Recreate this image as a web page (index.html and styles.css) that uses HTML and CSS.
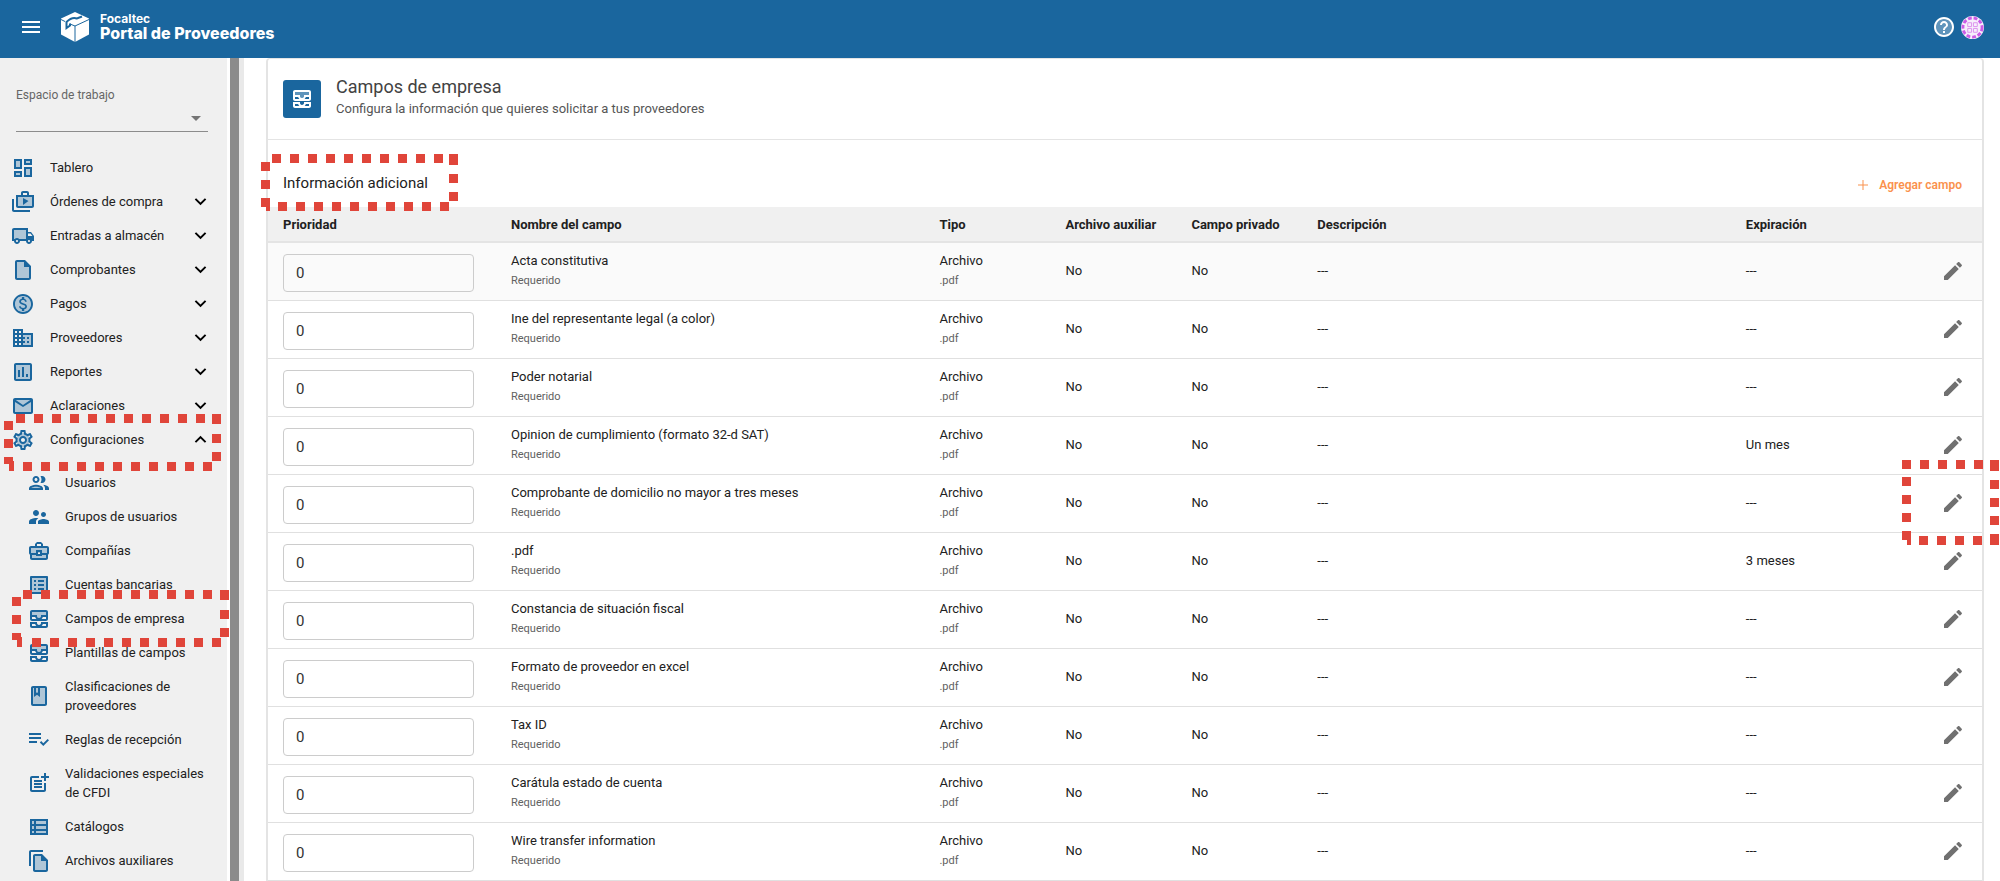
FILE: index.html
```html
<!DOCTYPE html>
<html lang="es">
<head>
    <meta charset="UTF-8">
    <meta name="viewport" content="width=device-width, initial-scale=1.0">
    <title>Portal de Proveedores</title>
    <link rel="stylesheet" href="styles.css">
</head>
<body>
    <svg class="sprite" aria-hidden="true">
        <symbol id="i-inbox" viewBox="0 0 24 24">
            <path class="tone" d="M5 5h14v3h-5v1c0 1.07-.93 2-2 2s-2-.93-2-2V8H5z"/>
            <path d="M19 3H5c-1.1 0-2 .9-2 2v7c0 1.1.9 2 2 2h14c1.1 0 2-.9 2-2V5c0-1.1-.9-2-2-2zM5 10h3.13c.21.78.67 1.47 1.27 2H5v-2zm14 2h-4.4c.6-.53 1.06-1.22 1.27-2H19v2zm0-4h-5v1c0 1.07-.93 2-2 2s-2-.93-2-2V8H5V5h14v3zm-5 7v1c0 .47-.19.9-.48 1.25-.37.45-.92.75-1.52.75s-1.15-.3-1.52-.75c-.29-.35-.48-.78-.48-1.25v-1H3v4c0 1.1.9 2 2 2h14c1.1 0 2-.9 2-2v-4h-7zm-9 2h3.13c.02.09.06.17.09.25.24.68.65 1.28 1.18 1.75H5v-2zm14 2h-4.4c.54-.47.95-1.07 1.18-1.75.03-.08.07-.17.09-.25H19v2z"/>
        </symbol>
        <symbol id="i-edit" viewBox="0 0 24 24">
            <path d="M3 17.25V21h3.75L17.81 9.94l-3.75-3.75L3 17.25zM20.71 7.04c.39-.39.39-1.02 0-1.41l-2.34-2.34c-.39-.39-1.02-.39-1.41 0l-1.83 1.83 3.75 3.75 1.83-1.83z"/>
        </symbol>
        <symbol id="i-down" viewBox="0 0 24 24">
            <path d="M7.41 8.59L12 13.17l4.59-4.58L18 10l-6 6-6-6z"/>
        </symbol>
    </svg>

    <header class="topbar">
        <button class="menu-btn" aria-label="Menú">
            <svg class="menu-icon" viewBox="0 0 18 12"><path d="M0 0h18v2H0zM0 5h18v2H0zM0 10h18v2H0z"/></svg>
        </button>
        <a class="brand" href="#">
            <svg class="brand-logo" viewBox="0 0 30 30">
                <path d="M15 0L29 6.5V22.5L15 30 1 22.5V6.5z"/>
                <path class="brand-seam" d="M29 7.5L15 14V30M1 7.5L5 9.5M10 12L15 14"/>
                <path class="brand-cut" d="M22 4.5L17 6.5Q12 4.5 6.500 10V16L10 13.5V11.5"/>
            </svg>
            <span class="brand-text">
                <span class="brand-small">Focaltec</span>
                <span class="brand-name">Portal de Proveedores</span>
            </span>
        </a>
        <div class="topbar-right">
            <button class="round-btn" aria-label="Ayuda">
                <svg class="icon" viewBox="0 0 24 24"><circle class="tone" cx="12" cy="12" r="9"/><path d="M11 18h2v-2h-2v2zm1-16C6.480 2 2 6.480 2 12s4.480 10 10 10 10-4.480 10-10S17.520 2 12 2zm0 18c-4.410 0-8-3.590-8-8s3.590-8 8-8 8 3.590 8 8-3.590 8-8 8zm0-14c-2.210 0-4 1.790-4 4h2c0-1.100.9-2 2-2s2 .9 2 2c0 2-3 1.750-3 5h2c0-2.250 3-2.500 3-5 0-2.210-1.790-4-4-4z"/></svg>
            </button>
            <button class="round-btn" aria-label="Cuenta">
                <svg class="avatar" viewBox="0 0 24 24">
                    <circle class="avatar-bg" cx="12" cy="12" r="12"/>
                    <circle class="avatar-ring" cx="12" cy="12" r="10"/>
                    <path class="avatar-grid" d="M7 7h4v4H7zM13 7h4v4h-4zM7 13h4v4H7zM13 13h4v4h-4z"/>
                </svg>
            </button>
        </div>
    </header>

    <div class="layout">
        <nav class="sidebar">
            <div class="workspace">
                <label for="workspace">Espacio de trabajo</label>
                <div class="select-wrap">
                    <select id="workspace"><option></option></select>
                    <span class="caret"></span>
                </div>
            </div>

            <ul class="menu">
                <li><a href="#">
                    <svg class="icon" viewBox="0 0 24 24"><path class="tone" d="M5 5h4v6H5zm10 8h4v6h-4zM5 17h4v2H5zM15 5h4v2h-4z"/><path d="M3 13h8V3H3v10zm2-8h4v6H5V5zm8 16h8V11h-8v10zm2-8h4v6h-4v-6zM13 3v6h8V3h-8zm6 4h-4V5h4v2zM3 21h8v-6H3v6zm2-4h4v2H5v-2z"/></svg>
                    <span>Tablero</span>
                </a></li>
                <li><a href="#">
                    <svg class="icon" viewBox="0 0 24 24"><path class="tone" d="M7 7h14v9H7z"/><path d="M3 9H1v11c0 1.110.89 2 2 2h16v-2H3V9z"/><path d="M18 5V3c0-1.110-.89-2-2-2h-4c-1.110 0-2 .89-2 2v2H5v11c0 1.110.89 2 2 2h14c1.110 0 2-.89 2-2V5h-5zm-6-2h4v2h-4V3zm9 13H7V7h14v9zM12 8v7l5.500-4z"/></svg>
                    <span>Órdenes de compra</span>
                    <svg class="chevron"><use href="#i-down"/></svg>
                </a></li>
                <li><a href="#">
                    <svg class="icon" viewBox="0 0 24 24"><path class="tone" d="M3 6h12v9H3z"/><path d="M20 8h-3V4H3c-1.100 0-2 .9-2 2v11h2c0 1.660 1.340 3 3 3s3-1.340 3-3h6c0 1.660 1.340 3 3 3s3-1.340 3-3h2v-5l-3-4zm-.5 1.500l1.960 2.500H17V9.500h2.500zM6 18c-.55 0-1-.45-1-1s.45-1 1-1 1 .45 1 1-.45 1-1 1zm2.220-3c-.55-.61-1.330-1-2.220-1s-1.670.39-2.220 1H3V6h12v9H8.220zM18 18c-.55 0-1-.45-1-1s.45-1 1-1 1 .45 1 1-.45 1-1 1z"/></svg>
                    <span>Entradas a almacén</span>
                    <svg class="chevron"><use href="#i-down"/></svg>
                </a></li>
                <li><a href="#">
                    <svg class="icon" viewBox="0 0 24 24"><path class="tone" d="M13 4H6v16h12V9h-5z"/><path d="M14 2H6c-1.100 0-2 .9-2 2v16c0 1.100.9 2 2 2h12c1.100 0 2-.9 2-2V8l-6-6zM6 20V4h7v5h5v11H6z"/></svg>
                    <span>Comprobantes</span>
                    <svg class="chevron"><use href="#i-down"/></svg>
                </a></li>
                <li><a href="#">
                    <svg class="icon" viewBox="0 0 24 24"><circle class="tone" cx="12" cy="12" r="8"/><path d="M12 2C6.480 2 2 6.480 2 12s4.480 10 10 10 10-4.480 10-10S17.520 2 12 2zm0 18c-4.410 0-8-3.590-8-8s3.590-8 8-8 8 3.590 8 8-3.590 8-8 8zm.31-8.860c-1.770-.45-2.340-.94-2.340-1.670 0-.84.79-1.430 2.100-1.430 1.380 0 1.900.66 1.940 1.640h1.710c-.05-1.340-.87-2.570-2.490-2.970V5H10.900v1.690c-1.510.32-2.720 1.300-2.720 2.810 0 1.790 1.490 2.690 3.660 3.210 1.950.46 2.340 1.150 2.340 1.870 0 .53-.39 1.390-2.100 1.390-1.600 0-2.230-.72-2.320-1.640H8.040c.1 1.700 1.360 2.660 2.860 2.970V19h2.340v-1.670c1.520-.29 2.720-1.160 2.730-2.770-.01-2.200-1.900-2.960-3.660-3.420z"/></svg>
                    <span>Pagos</span>
                    <svg class="chevron"><use href="#i-down"/></svg>
                </a></li>
                <li><a href="#">
                    <svg class="icon" viewBox="0 0 24 24"><path class="tone" d="M12 9h8v10h-8z"/><path d="M12 7V3H2v18h20V7H12zM6 19H4v-2h2v2zm0-4H4v-2h2v2zm0-4H4V9h2v2zm0-4H4V5h2v2zm4 12H8v-2h2v2zm0-4H8v-2h2v2zm0-4H8V9h2v2zm0-4H8V5h2v2zm10 12h-8v-2h2v-2h-2v-2h2v-2h-2V9h8v10zm-2-8h-2v2h2v-2zm0 4h-2v2h2v-2z"/></svg>
                    <span>Proveedores</span>
                    <svg class="chevron"><use href="#i-down"/></svg>
                </a></li>
                <li><a href="#">
                    <svg class="icon" viewBox="0 0 24 24"><path class="tone" d="M5 5h14v14H5z"/><path d="M19 3H5c-1.100 0-2 .9-2 2v14c0 1.100.9 2 2 2h14c1.100 0 2-.9 2-2V5c0-1.100-.9-2-2-2zm0 16H5V5h14v14zM7 10h2v7H7zm4-3h2v10h-2zm4 7h2v3h-2z"/></svg>
                    <span>Reportes</span>
                    <svg class="chevron"><use href="#i-down"/></svg>
                </a></li>
                <li><a href="#">
                    <svg class="icon" viewBox="0 0 24 24"><path class="tone" d="M4 6h16v12H4z"/><path d="M20 4H4c-1.100 0-2 .9-2 2v12c0 1.100.9 2 2 2h16c1.100 0 2-.9 2-2V6c0-1.100-.9-2-2-2zm-.8 2L12 11 4.800 6h14.400zM4 18V8l8 5 8-5v10H4z"/></svg>
                    <span>Aclaraciones</span>
                    <svg class="chevron"><use href="#i-down"/></svg>
                </a></li>
                <li class="marked"><a href="#">
                    <svg class="icon" viewBox="0 0 24 24"><path class="tone" d="M12 5a7 7 0 1 0 .01 0zM12 9a3 3 0 1 1-.01 0z"/><path d="M19.430 12.980c.04-.32.07-.64.07-.98 0-.34-.03-.66-.07-.98l2.110-1.650c.19-.15.24-.42.12-.64l-2-3.460c-.09-.16-.26-.25-.44-.25-.06 0-.12.01-.17.03l-2.490 1c-.52-.4-1.080-.73-1.690-.98l-.38-2.650C14.460 2.180 14.250 2 14 2h-4c-.25 0-.46.18-.49.42l-.38 2.650c-.61.25-1.170.59-1.690.98l-2.490-1c-.06-.02-.12-.03-.18-.03-.17 0-.34.09-.43.25l-2 3.460c-.13.22-.07.49.12.64l2.110 1.650c-.04.32-.07.65-.07.98 0 .33.03.66.07.98l-2.110 1.650c-.19.15-.24.42-.12.64l2 3.460c.09.16.26.25.44.25.06 0 .12-.01.17-.03l2.490-1c.52.4 1.080.73 1.690.98l.38 2.650c.03.24.24.42.49.42h4c.25 0 .46-.18.49-.42l.38-2.650c.61-.25 1.170-.59 1.690-.98l2.490 1c.06.02.12.03.18.03.17 0 .34-.09.43-.25l2-3.460c.12-.22.07-.49-.12-.64l-2.110-1.650zm-1.980-1.710c.04.31.05.52.05.73 0 .21-.02.43-.05.73l-.14 1.130.89.7 1.080.84-.7 1.210-1.270-.51-1.040-.42-.9.68c-.43.32-.84.56-1.250.73l-1.060.43-.16 1.130-.2 1.350h-1.400l-.19-1.350-.16-1.130-1.060-.43c-.43-.18-.83-.41-1.230-.71l-.91-.7-1.060.43-1.270.51-.7-1.210 1.080-.84.89-.7-.14-1.130c-.03-.31-.05-.54-.05-.74s.02-.43.05-.73l.14-1.130-.89-.7-1.080-.84.7-1.210 1.270.51 1.040.42.9-.68c.43-.32.84-.56 1.250-.73l1.060-.43.16-1.130.2-1.350h1.390l.19 1.350.16 1.130 1.060.43c.43.18.83.41 1.230.71l.91.7 1.060-.43 1.270-.51.7 1.210-1.070.85-.89.7.14 1.130zM12 8c-2.210 0-4 1.790-4 4s1.790 4 4 4 4-1.790 4-4-1.790-4-4-4zm0 6c-1.100 0-2-.9-2-2s.9-2 2-2 2 .9 2 2-.9 2-2 2z"/></svg>
                    <span>Configuraciones</span>
                    <svg class="chevron up"><use href="#i-down"/></svg>
                </a>
                <svg class="mark mark-menu" viewBox="0 0 217 57"><path d="M12 4.500H208M19 52.500H209M4.500 7V50M212.500 20V47"/><path class="corner" d="M208 0h9v10h-9zM5 47h5v10h-5z"/></svg>
                </li>
            </ul>

            <ul class="menu submenu">
                <li><a href="#">
                    <svg class="icon" viewBox="0 0 24 24"><path class="tone" d="M4.340 17c.84-.58 2.870-1.250 4.660-1.250s3.820.67 4.660 1.250z"/><path d="M9 13.750c-2.340 0-7 1.170-7 3.500V19h14v-1.750c0-2.330-4.660-3.500-7-3.500zM4.340 17c.84-.58 2.870-1.250 4.660-1.250s3.820.67 4.660 1.250H4.340zM9 12c1.930 0 3.500-1.570 3.500-3.500S10.930 5 9 5 5.500 6.570 5.500 8.500 7.070 12 9 12zm0-5c.83 0 1.500.67 1.500 1.500S9.830 10 9 10s-1.500-.67-1.500-1.500S8.170 7 9 7zm7.040 6.810c1.160.84 1.960 1.960 1.960 3.440V19h4v-1.750c0-2.020-3.500-3.170-5.960-3.440zM15 12c1.930 0 3.500-1.570 3.500-3.500S16.930 5 15 5c-.54 0-1.040.13-1.500.35.63.89 1 1.980 1 3.150s-.37 2.260-1 3.150c.46.22.96.35 1.500.35z"/></svg>
                    <span>Usuarios</span>
                </a></li>
                <li><a href="#">
                    <svg class="icon" viewBox="0 0 24 24"><path d="M16.500 12c1.380 0 2.490-1.120 2.490-2.500S17.880 7 16.500 7C15.120 7 14 8.120 14 9.500s1.120 2.500 2.500 2.500zM9 11c1.660 0 2.990-1.340 2.990-3S10.660 5 9 5C7.340 5 6 6.340 6 8s1.340 3 3 3zm7.500 3c-1.830 0-5.500.92-5.500 2.750V19h11v-2.250c0-1.830-3.670-2.750-5.500-2.750zM9 13c-2.330 0-7 1.170-7 3.500V19h7v-2.250c0-.85.33-2.340 2.370-3.470C10.500 13.100 9.660 13 9 13z"/></svg>
                    <span>Grupos de usuarios</span>
                </a></li>
                <li><a href="#">
                    <svg class="icon" viewBox="0 0 24 24"><path class="tone" d="M4 9h16v5H4zM5 16h14v3H5z"/><path d="M20 7h-4V5l-2-2h-4L8 5v2H4c-1.100 0-2 .9-2 2v5c0 .75.4 1.380 1 1.730V19c0 1.110.89 2 2 2h14c1.110 0 2-.89 2-2v-3.280c.59-.35 1-.99 1-1.720V9c0-1.100-.9-2-2-2zM10 5h4v2h-4V5zM4 9h16v5h-5v-3H9v3H4V9zm9 6h-2v-2h2v2zm6 4H5v-3h4v1h6v-1h4v3z"/></svg>
                    <span>Compañías</span>
                </a></li>
                <li><a href="#">
                    <svg class="icon" viewBox="0 0 24 24"><path class="tone" d="M5 5h14v14H5z"/><path d="M11 7h6v2h-6zm0 4h6v2h-6zm0 4h6v2h-6zM7 7h2v2H7zm0 4h2v2H7zm0 4h2v2H7zM20.100 3H3.900c-.5 0-.9.4-.9.9v16.200c0 .4.4.9.9.9h16.200c.4 0 .9-.5.9-.9V3.900c0-.5-.5-.9-.9-.9zM19 19H5V5h14v14z"/></svg>
                    <span>Cuentas bancarias</span>
                </a></li>
                <li class="marked"><a href="#">
                    <svg class="icon"><use href="#i-inbox"/></svg>
                    <span>Campos de empresa</span>
                </a>
                <svg class="mark mark-submenu" viewBox="0 0 217 57"><path d="M11 4.500H208M20 52.500H210M4.500 7V50M212.500 20V47"/><path class="corner" d="M208 0h9v10h-9zM5 47h5v10h-5z"/></svg>
                </li>
                <li><a href="#">
                    <svg class="icon"><use href="#i-inbox"/></svg>
                    <span>Plantillas de campos</span>
                </a></li>
                <li><a href="#">
                    <svg class="icon" viewBox="0 0 24 24"><path class="tone" d="M6 4h12v16H6z"/><path d="M18 2H6c-1.100 0-2 .9-2 2v16c0 1.100.9 2 2 2h12c1.100 0 2-.9 2-2V4c0-1.100-.9-2-2-2zM9 4h2v5l-1-.75L9 9V4zm9 16H6V4h1v9l3-2.250L13 13V4h5v16z"/></svg>
                    <span>Clasificaciones de proveedores</span>
                </a></li>
                <li><a href="#">
                    <svg class="icon" viewBox="0 0 24 24"><path d="M2 5h12v2H2zM2 9h12v2H2zM2 13h8v2H2zM20.600 10.900l-4.300 4.300-2.100-2.100-1.400 1.400 3.500 3.500 5.700-5.700z"/></svg>
                    <span>Reglas de recepción</span>
                </a></li>
                <li><a href="#">
                    <svg class="icon" viewBox="0 0 24 24"><path d="M17 19H5V7h7V5H5c-1.100 0-2 .9-2 2v12c0 1.100.9 2 2 2h12c1.100 0 2-.9 2-2v-7h-2v7z"/><path d="M19 2h-2v3h-3v2h3v3h2V7h3V5h-3V2zM7 9h8v2H7zM7 12h8v2H7zM7 15h8v2H7z"/></svg>
                    <span>Validaciones especiales de CFDI</span>
                </a></li>
                <li><a href="#">
                    <svg class="icon" viewBox="0 0 24 24"><path class="tone" d="M4 6h16v12H4z"/><path d="M3 4v16h18V4H3zm4 2v3H5V6h2zm-2 8v-3h2v3H5zm0 2h2v2H5v-2zm14 2H9v-2h10v2zm0-4H9v-3h10v3zm0-5H9V6h10v3z"/></svg>
                    <span>Catálogos</span>
                </a></li>
                <li><a href="#">
                    <svg class="icon" viewBox="0 0 24 24"><path class="tone" d="M8 7h6v5h5v9H8z"/><path d="M16 1H4c-1.100 0-2 .9-2 2v14h2V3h12V1zm-1 4H8c-1.100 0-2 .9-2 2v14c0 1.100.9 2 2 2h11c1.100 0 2-.9 2-2V11l-6-6zM8 21V7h6v5h5v9H8z"/></svg>
                    <span>Archivos auxiliares</span>
                </a></li>
            </ul>
        </nav>
        <div class="scrollbar"></div>

        <main class="content">
            <section class="card">
                <div class="card-header">
                    <span class="card-icon"><svg class="icon"><use href="#i-inbox"/></svg></span>
                    <div class="card-title">
                        <h1>Campos de empresa</h1>
                        <p>Configura la información que quieres solicitar a tus proveedores</p>
                    </div>
                </div>
                <div class="section-bar">
                    <h2 class="marked">Información adicional
                        <svg class="mark mark-title" viewBox="0 0 197 57"><path d="M11 4.500H188M17 52.500H188M4.500 8V53M192.500 20V47"/><path class="corner" d="M188 0h9v11h-9zM5 46h4v11h-4z"/></svg>
                    </h2>
                    <button class="add-btn">
                        <svg class="plus" viewBox="0 0 10 10"><path d="M4.500 0h1v4.500H10v1H5.500V10h-1V5.500H0v-1h4.500z"/></svg>
                        Agregar campo
                    </button>
                </div>
                <table class="fields">
                    <colgroup>
                        <col class="col-priority">
                        <col class="col-wide">
                        <col class="col-small">
                        <col class="col-small">
                        <col class="col-small">
                        <col class="col-wide">
                        <col>
                        <col class="col-edit">
                    </colgroup>
                    <thead>
                        <tr>
                            <th>Prioridad</th>
                            <th>Nombre del campo</th>
                            <th>Tipo</th>
                            <th>Archivo auxiliar</th>
                            <th>Campo privado</th>
                            <th>Descripción</th>
                            <th>Expiración</th>
                            <td></td>
                        </tr>
                    </thead>
                    <tbody id="rows"></tbody>
                </table>
            </section>
        </main>
    </div>

    <script>
        const fields = [
            { name: 'Acta constitutiva', expires: '---' },
            { name: 'Ine del representante legal (a color)', expires: '---' },
            { name: 'Poder notarial', expires: '---' },
            { name: 'Opinion de cumplimiento (formato 32-d SAT)', expires: 'Un mes' },
            { name: 'Comprobante de domicilio no mayor a tres meses', expires: '---', marked: true },
            { name: '.pdf', expires: '3 meses' },
            { name: 'Constancia de situación fiscal', expires: '---' },
            { name: 'Formato de proveedor en excel', expires: '---' },
            { name: 'Tax ID', expires: '---' },
            { name: 'Carátula estado de cuenta', expires: '---' },
            { name: 'Wire transfer information', expires: '---' }
        ];
        const mark = `<svg class="mark mark-edit" viewBox="0 0 97 85">
            <path d="M0 4.500H88M17 80.500H88M4.500 17V85M92.500 20V85"/>
            <path class="corner" d="M88 0h9v11h-9zM5 76h4v9h-4zM88 76h9v9h-9z"/></svg>`;

        document.getElementById('rows').innerHTML = fields.map(field => `
            <tr>
                <td class="priority"><input type="text" value="0" aria-label="Prioridad de ${field.name}"></td>
                <td>${field.name}<small>Requerido</small></td>
                <td>Archivo<small>.pdf</small></td>
                <td>No</td>
                <td>No</td>
                <td>---</td>
                <td>${field.expires}</td>
                <td class="edit">
                    <button class="edit-btn${field.marked ? ' marked' : ''}" aria-label="Editar ${field.name}">
                        <svg class="icon"><use href="#i-edit"/></svg>${field.marked ? mark : ''}
                    </button>
                </td>
            </tr>`).join('');
    </script>
</body>
</html>
```
FILE: styles.css
```css
* {
    box-sizing: border-box;
}
body {
    margin: 0;
    height: 100vh;
    overflow: hidden;
    display: flex;
    flex-direction: column;
    font-family: Roboto, Arial, sans-serif;
    font-size: 13px;
    color: #212121;
    background: #fff;
}
button {
    padding: 0;
    border: none;
    background: none;
    font-family: inherit;
    cursor: pointer;
}
a {
    color: inherit;
    text-decoration: none;
}
.sprite {
    display: none;
}
.icon {
    display: block;
    flex: none;
    width: 24px;
    height: 24px;
    fill: currentColor;
}
.tone {
    opacity: 0.3;
}

/* top bar */
.topbar {
    flex: none;
    height: 58px;
    padding: 0 16px 4px 22px;
    display: flex;
    align-items: center;
    background: #1a669e;
    color: #fff;
}
.menu-icon {
    display: block;
    width: 18px;
    height: 12px;
    fill: #fff;
}
.brand {
    margin-left: 20px;
    display: flex;
    align-items: center;
    gap: 10px;
}
.brand-logo {
    width: 30px;
    height: 30px;
    fill: #fff;
}
.brand-seam,
.brand-cut {
    fill: none;
    stroke: #1a669e;
    stroke-width: 1;
}
.brand-cut {
    stroke-width: 2;
}
.brand-text {
    display: flex;
    flex-direction: column;
    font-family: Inter, sans-serif;
    font-weight: 800;
}
.brand-small {
    font-size: 12px;
    line-height: 12px;
    font-weight: 700;
}
.brand-name {
    font-size: 16px;
    line-height: 16px;
}
.topbar-right {
    margin-left: auto;
    display: flex;
    align-items: center;
    gap: 5px;
}
.round-btn {
    color: #fff;
}
.avatar {
    display: block;
    width: 23px;
    height: 23px;
    fill: none;
}
.avatar-bg {
    fill: #f6eefb;
}
.avatar-ring {
    stroke: #cb5be6;
    stroke-width: 3;
    stroke-dasharray: 4 2;
}
.avatar-grid {
    stroke: #dc92ee;
    stroke-width: 1;
}

/* side menu */
.layout {
    flex: 1;
    min-height: 0;
    display: flex;
}
.sidebar {
    flex: none;
    width: 227px;
    background: #f0f0f0;
}
.scrollbar {
    flex: none;
    width: 17px;
    background: #8b8b8b;
    border: solid #fff;
    border-width: 0 5px 0 3px;
    border-right-color: #e9e9e9;
}
.workspace {
    margin: 0 19px 19px 16px;
    padding-top: 29px;
}
.workspace label {
    display: block;
    font-size: 12px;
    line-height: 16px;
    color: #666;
}
.select-wrap {
    position: relative;
}
.select-wrap select {
    appearance: none;
    display: block;
    width: 100%;
    height: 29px;
    border: none;
    border-bottom: 1px solid #8c8c8c;
    background: transparent;
}
.caret {
    position: absolute;
    right: 7px;
    bottom: 11px;
    border: 5px solid transparent;
    border-top-color: #757575;
    border-bottom: none;
}
.menu {
    list-style: none;
    margin: 0;
    padding: 0;
}
.menu a {
    display: flex;
    align-items: center;
    gap: 15px;
    min-height: 34px;
    padding: 7px 15px 8px 11px;
    line-height: 19px;
}
.menu .icon {
    margin: -3px 0;
    color: #1a669e;
}
.submenu {
    padding-top: 9px;
}
.submenu a {
    gap: 14px;
    padding-left: 27px;
}
.chevron {
    width: 23px;
    height: 23px;
    margin: -2px 0 -2px auto;
}
.chevron.up {
    transform: rotate(180deg);
}

/* dashed highlight frames */
.marked {
    position: relative;
}
.mark {
    position: absolute;
    z-index: 1;
    fill: none;
    stroke: #e0453a;
    stroke-width: 9;
    stroke-dasharray: 9 9;
    pointer-events: none;
}
.mark .corner {
    fill: #e0453a;
    stroke: none;
}
.mark-menu {
    width: 217px;
    top: -9px;
    left: 4px;
}
.mark-submenu {
    width: 217px;
    top: -12px;
    left: 12px;
}
.mark-title {
    width: 197px;
    top: -19px;
    left: -22px;
}
.mark-edit {
    width: 97px;
    top: -31px;
    left: -39px;
}

/* main card */
.content {
    flex: 1;
    min-width: 0;
    padding: 0 16px 0 22px;
}
.card {
    min-height: 100%;
    border: 2px solid #e4e4e4;
    border-top-width: 1px;
    border-bottom: none;
    border-radius: 4px 4px 0 0;
}
.card-header {
    display: flex;
    align-items: center;
    gap: 15px;
    height: 81px;
    padding: 0 15px;
    border-bottom: 1px solid #e4e4e4;
    color: #424242;
}
.card-icon {
    padding: 7px;
    border-radius: 3px;
    background: #1a669e;
    color: #fff;
}
.card-title {
    padding-bottom: 4px;
}
.card-header h1 {
    margin: 0;
    font-size: 18px;
    font-weight: 400;
    line-height: 24px;
}
.card-header p {
    margin: 0;
    font-size: 13px;
    line-height: 20px;
    color: #555;
}
.section-bar {
    display: flex;
    align-items: center;
    justify-content: space-between;
    height: 67px;
    padding: 18px 20px 0 15px;
}
.section-bar h2 {
    margin: 0;
    font-size: 15px;
    font-weight: 400;
    line-height: 20px;
}
.add-btn {
    display: flex;
    align-items: center;
    gap: 11px;
    padding-top: 4px;
    font-size: 12px;
    font-weight: 600;
    color: #fa914d;
}
.plus {
    width: 10px;
    height: 10px;
    fill: currentColor;
}

.fields {
    width: 100%;
    table-layout: fixed;
    border-collapse: separate;
    border-spacing: 0;
}
.col-priority {
    width: 13.3%;
}
.col-wide {
    width: 25%;
}
.col-small {
    width: 7.35%;
}
.col-edit {
    width: 60px;
}
.fields thead th,
.fields thead td {
    height: 36px;
    padding: 0 15px;
    background: #f0f0f0;
    border-bottom: 2px solid #e4e4e4;
    text-align: left;
    font-weight: 700;
    white-space: nowrap;
}
.fields tbody td {
    height: 58px;
    padding: 0 15px 2px;
    border-bottom: 1px solid #e0e0e0;
    line-height: 20px;
}
.fields tbody tr:first-child {
    background: #fafafa;
}
.fields small {
    display: block;
    font-size: 11px;
    line-height: 19px;
    color: #616161;
}
.fields tbody .priority {
    padding-top: 3px;
    padding-bottom: 0;
}
.priority input {
    display: block;
    width: 191px;
    height: 38px;
    padding: 0 12px;
    border: 1px solid #ccc;
    border-radius: 4px;
    background: transparent;
    font-family: inherit;
    font-size: 15px;
    color: #333;
}
.fields tbody .edit {
    padding: 0 0 2px;
}
.edit-btn {
    display: block;
    margin-left: 19px;
    color: #707070;
}
```
